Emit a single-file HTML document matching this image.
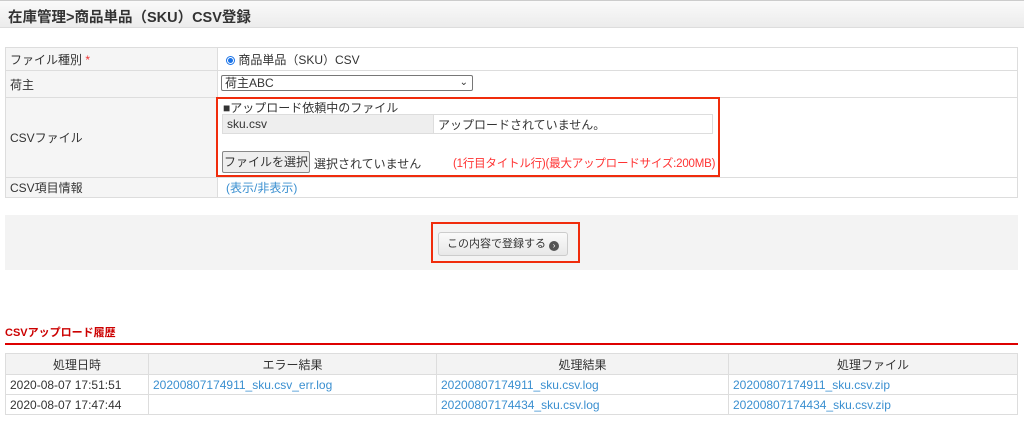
<!DOCTYPE html>
<html><head><meta charset="utf-8"><style>
body{margin:0;width:1024px;height:424px;background:#fff;font-family:"Liberation Sans","Noto Sans CJK JP",sans-serif;font-size:12px;color:#333;position:relative;overflow:hidden}
.a{position:absolute}
.hdr{left:0;top:0;width:1024px;height:28px;background:linear-gradient(#fafafa,#ececec);border-bottom:1px solid #ddd;border-top:1px solid #ccc;box-sizing:border-box}
table{border-collapse:collapse}
td{border:1px solid #ddd;padding:0 4px}
.lab{background:#f5f5f5}
a{color:#3a8fd0;text-decoration:none}
</style></head><body>
<div class="a hdr"></div>
<div class="a" style="left:8px;top:6px;font-size:14.5px;font-weight:bold;color:#333">在庫管理&gt;商品単品（SKU）CSV登録</div>

<table class="a" style="left:5px;top:47px;width:1013px">
<tr style="height:23px"><td class="lab" style="width:203px">ファイル種別 <span style="color:#e33">*</span></td><td style="padding-left:8px"><span style="display:inline-block;width:9px;height:9px;border-radius:50%;border:1px solid #1a73e8;box-sizing:border-box;background:radial-gradient(#1a73e8 45%,#fff 55%);vertical-align:-1px"></span> 商品単品（SKU）CSV</td></tr>
<tr style="height:27px"><td class="lab">荷主</td><td></td></tr>
<tr style="height:80px"><td class="lab">CSVファイル</td><td></td></tr>
<tr style="height:20px"><td class="lab">CSV項目情報</td><td style="padding-left:8px"><a>(表示/非表示)</a></td></tr>
</table>
<div class="a" style="left:221px;top:75px;width:252px;height:16px;border:1px solid #777;border-radius:2px;box-sizing:border-box;padding-left:3px;line-height:14px">荷主ABC<span style="position:absolute;right:4px;top:0;font-size:10px">&#x2304;</span></div>
<div class="a" style="left:216px;top:97px;width:504px;height:80px;border:2px solid #f02c0c;box-sizing:border-box"></div>
<div class="a" style="left:223px;top:99px">■アップロード依頼中のファイル</div>
<table class="a" style="left:222px;top:114px;width:491px;height:20px"><tr><td style="width:202px;background:#eee">sku.csv</td><td>アップロードされていません。</td></tr></table>
<div class="a" style="left:222px;top:151px;width:88px;height:22px;border:1px solid #888;background:#eee;border-radius:2px;box-sizing:border-box;text-align:center;line-height:20px">ファイルを選択</div>
<div class="a" style="left:314px;top:155px">選択されていません</div>
<div class="a" style="left:453px;top:155px;color:#f33;font-size:11.5px;letter-spacing:-0.2px">(1行目タイトル行)(最大アップロードサイズ:200MB)</div>

<div class="a" style="left:5px;top:215px;width:1013px;height:55px;background:#f3f3f3"></div>
<div class="a" style="left:431px;top:222px;width:149px;height:41px;border:2px solid #f02c0c;box-sizing:border-box"></div>
<div class="a" style="left:438px;top:232px;width:130px;height:24px;border:1px solid #ccc;border-radius:3px;background:linear-gradient(#fafafa,#e8e8e8);box-sizing:border-box;font-size:11px;line-height:22px;padding-left:8px">この内容で登録する <span style="display:inline-block;width:10px;height:10px;border-radius:50%;background:#555;color:#fff;font-size:8px;line-height:10px;text-align:center;vertical-align:-1px">›</span></div>

<div class="a" style="left:5px;top:324px;color:#c00;font-weight:bold;font-size:11px">CSVアップロード履歴</div>
<div class="a" style="left:5px;top:343px;width:1013px;height:2px;background:#d00"></div>
<table class="a" style="left:5px;top:353px;width:1013px">
<tr style="height:21px;background:#f3f3f3;text-align:center"><td style="width:134px">処理日時</td><td style="width:279px">エラー結果</td><td style="width:283px">処理結果</td><td>処理ファイル</td></tr>
<tr style="height:20px"><td>2020-08-07 17:51:51</td><td><a>20200807174911_sku.csv_err.log</a></td><td><a>20200807174911_sku.csv.log</a></td><td><a>20200807174911_sku.csv.zip</a></td></tr>
<tr style="height:20px"><td>2020-08-07 17:47:44</td><td></td><td><a>20200807174434_sku.csv.log</a></td><td><a>20200807174434_sku.csv.zip</a></td></tr>
</table>
</body></html>
